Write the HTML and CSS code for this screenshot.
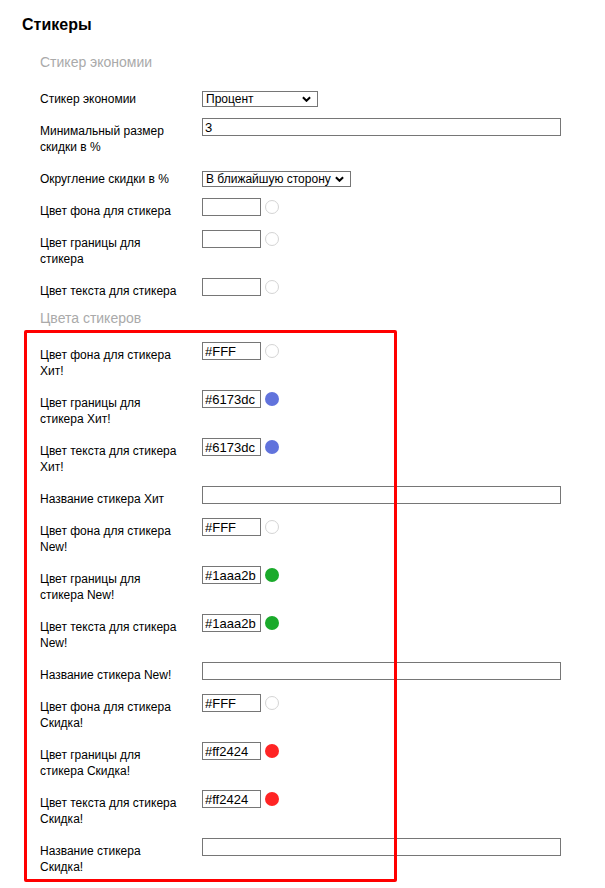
FILE: index.html
```html
<html lang="ru">
<head>
  <meta charset="utf-8">
  <title>Стикеры</title>
  <link rel="stylesheet" href="styles.css">
</head>
<body>
<div class="settings">
  <h1 class="title">Стикеры</h1>

  <h2 class="group-title">Стикер экономии</h2>
  <div class="fields">
    <div class="field">
      <label class="field-label">Стикер экономии</label>
      <span class="select select-short"><span class="select-text">Процент</span><svg viewBox="0 0 10 6"><path d="M1 1l4 4 4-4"/></svg></span>
    </div>
    <div class="field">
      <label class="field-label">Минимальный размер скидки в %</label>
      <input class="input input-wide" value="3">
    </div>
    <div class="field">
      <label class="field-label">Округление скидки в %</label>
      <span class="select select-long"><span class="select-text">В ближайшую сторону</span><svg viewBox="0 0 10 6"><path d="M1 1l4 4 4-4"/></svg></span>
    </div>
    <div class="field">
      <label class="field-label">Цвет фона для стикера</label>
      <span class="color"><input class="input input-color" value=""><i class="swatch"></i></span>
    </div>
    <div class="field">
      <label class="field-label">Цвет границы для стикера</label>
      <span class="color"><input class="input input-color" value=""><i class="swatch"></i></span>
    </div>
    <div class="field">
      <label class="field-label">Цвет текста для стикера</label>
      <span class="color"><input class="input input-color" value=""><i class="swatch"></i></span>
    </div>
  </div>

  <h2 class="group-title">Цвета стикеров</h2>
  <div class="fields fields-marked">
    <div class="mark"></div>
    <div class="field">
      <label class="field-label">Цвет фона для стикера Хит!</label>
      <span class="color"><input class="input input-color" value="#FFF"><i class="swatch"></i></span>
    </div>
    <div class="field">
      <label class="field-label">Цвет границы для стикера Хит!</label>
      <span class="color"><input class="input input-color" value="#6173dc"><i class="swatch" style="background: #6173dc"></i></span>
    </div>
    <div class="field">
      <label class="field-label">Цвет текста для стикера Хит!</label>
      <span class="color"><input class="input input-color" value="#6173dc"><i class="swatch" style="background: #6173dc"></i></span>
    </div>
    <div class="field">
      <label class="field-label">Название стикера Хит</label>
      <input class="input input-wide" value="">
    </div>
    <div class="field">
      <label class="field-label">Цвет фона для стикера New!</label>
      <span class="color"><input class="input input-color" value="#FFF"><i class="swatch"></i></span>
    </div>
    <div class="field">
      <label class="field-label">Цвет границы для стикера New!</label>
      <span class="color"><input class="input input-color" value="#1aaa2b"><i class="swatch" style="background: #1aaa2b"></i></span>
    </div>
    <div class="field">
      <label class="field-label">Цвет текста для стикера New!</label>
      <span class="color"><input class="input input-color" value="#1aaa2b"><i class="swatch" style="background: #1aaa2b"></i></span>
    </div>
    <div class="field">
      <label class="field-label">Название стикера New!</label>
      <input class="input input-wide" value="">
    </div>
    <div class="field">
      <label class="field-label">Цвет фона для стикера Скидка!</label>
      <span class="color"><input class="input input-color" value="#FFF"><i class="swatch"></i></span>
    </div>
    <div class="field">
      <label class="field-label">Цвет границы для стикера Скидка!</label>
      <span class="color"><input class="input input-color" value="#ff2424"><i class="swatch" style="background: #ff2424"></i></span>
    </div>
    <div class="field">
      <label class="field-label">Цвет текста для стикера Скидка!</label>
      <span class="color"><input class="input input-color" value="#ff2424"><i class="swatch" style="background: #ff2424"></i></span>
    </div>
    <div class="field">
      <label class="field-label">Название стикера Скидка!</label>
      <input class="input input-wide" value="">
    </div>
  </div>
</div>
</body>
</html>
```

FILE: styles.css
```css
html {
    margin: 0;
    padding: 0;
}

body {
    margin: 0;
    font-family: "Liberation Sans", Arial, sans-serif;
    color: #000;
    background: #fff;
}

.settings {
    padding: 0 22px;
}

.title {
    margin: 16px 0 20px;
    font-size: 16px;
    line-height: 18px;
    font-weight: bold;
}

.group-title {
    margin: 0 0 16px 18px;
    font-size: 14px;
    line-height: 16px;
    font-weight: normal;
    color: #aaa;
}

.fields {
    display: flex;
    flex-direction: column;
    gap: 11px;
    margin: 0 0 11px 18px;
}

.fields-marked {
    position: relative;
    margin-bottom: 0;
}

/* red highlight drawn over the group */
.mark {
    position: absolute;
    top: -12px;
    left: -16px;
    bottom: -7px;
    width: 373px;
    box-sizing: border-box;
    border: 3px solid #f00;
    border-radius: 2px;
    pointer-events: none;
}

.field {
    display: grid;
    grid-template-columns: 140px auto;
    column-gap: 22px;
    align-items: start;
}

.field-label {
    padding-top: 5px;
    font-size: 12px;
    line-height: 16px;
}

.input {
    box-sizing: border-box;
    height: 18px;
    margin: 0;
    padding: 0 2px;
    border: 1px solid #767676;
    border-radius: 0;
    font: 13px/16px "Liberation Sans", Arial, sans-serif;
    color: #000;
    background: #fff;
    outline: none;
}

.input-wide {
    width: 359px;
}

.input-color {
    width: 59px;
}

.color {
    display: flex;
    align-items: flex-start;
    gap: 4px;
}

.swatch {
    box-sizing: border-box;
    width: 14px;
    height: 14px;
    margin-top: 2px;
    border: 1px solid #d4d4d4;
    border-radius: 50%;
}

.swatch[style] {
    border: 0;
}

.select {
    box-sizing: border-box;
    display: flex;
    align-items: center;
    gap: 3px;
    height: 16px;
    margin-top: 5px;
    padding: 0 6px 0 3px;
    border: 1px solid #767676;
    font-size: 12px;
    line-height: 14px;
    white-space: nowrap;
}

.select-text {
    flex: 1;
    overflow: hidden;
}

.select svg {
    flex-shrink: 0;
    width: 9px;
    height: 6px;
    fill: none;
    stroke: #000;
    stroke-width: 2.2;
}

.select-short {
    width: 116px;
}

.select-long {
    width: 149px;
}
```
